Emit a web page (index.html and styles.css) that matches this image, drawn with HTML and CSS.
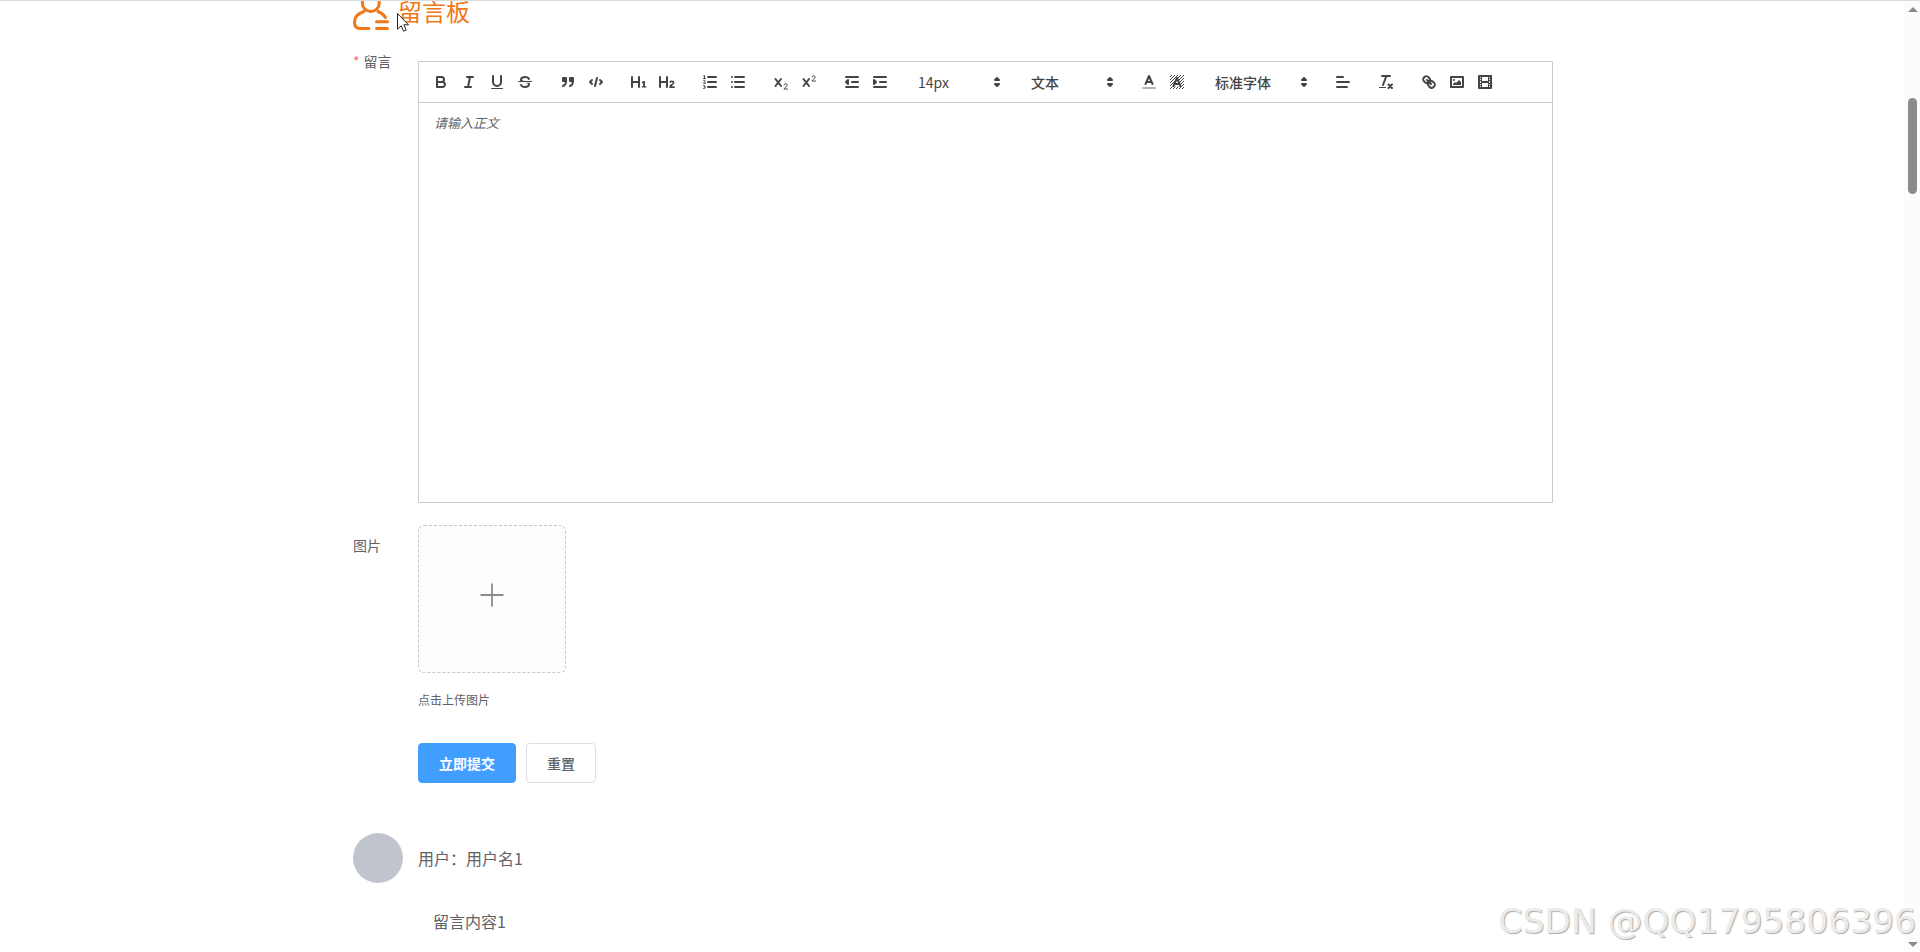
FILE: index.html
```html
<!DOCTYPE html>
<html lang="zh-CN">
<head>
  <meta charset="UTF-8">
  <title>留言板</title>
  <link rel="stylesheet" href="styles.css">
</head>
<body>
  <div class="container">
    <div class="title">
      <svg class="title-icon" viewBox="0 10 38 30">
        <circle cx="17.800" cy="12" r="8.500"/>
        <path d="M11 20.500C5 22.500 1.500 26 1.500 31c0 4 2 6.500 5.500 6.500H16M25 20.500c3.500 1.300 6 3.500 7.500 6M23.500 30.800H34.500M23.500 37.500H34.500"/>
      </svg>
      <span>留言板</span>
    </div>

    <div class="form-item">
      <label class="label required">留言</label>
      <div class="editor">
        <div class="toolbar">
          <span class="formats">
            <button><svg viewBox="0 0 18 18"><path class="st" d="M5,4H9.5A2.5,2.5,0,0,1,12,6.500v0A2.5,2.5,0,0,1,9.500,9H5V4Z"/><path class="st" d="M5,9h5.500A2.500,2.500,0,0,1,13,11.500v0A2.500,2.500,0,0,1,10.500,14H5V9Z"/></svg></button>
            <button><svg viewBox="0 0 18 18"><path class="st" d="M7 4H13M5 14H11M8 14L10 4"/></svg></button>
            <button><svg viewBox="0 0 18 18"><path class="st" d="M5,3V9a4.012,4.012,0,0,0,4,4H9a4.012,4.012,0,0,0,4-4V3"/><rect class="fi" x="3" y="15" width="12" height="1" rx=".5"/></svg></button>
            <button><svg viewBox="0 0 18 18"><path class="st thin" d="M15.500 8.500H2.500"/><path class="fi" d="M9.007,8C6.542,7.791,6,7.519,6,6.500,6,5.792,7.283,5,9,5c1.571,0,2.765.679,2.969,1.309a1,1,0,0,0,1.900-.617C13.356,4.106,11.354,3,9,3,6.200,3,4,4.538,4,6.500a3.200,3.200,0,0,0,.5,1.843Z"/><path class="fi" d="M8.984,10C11.457,10.208,12,10.479,12,11.500c0,.708-1.283,1.500-3,1.500-1.571,0-2.765-.679-2.969-1.309a1,1,0,1,0-1.900.617C4.644,13.894,6.646,15,9,15c2.800,0,5-1.538,5-3.500a3.200,3.200,0,0,0-.5-1.843Z"/></svg></button>
          </span>
          <span class="formats">
            <button><svg viewBox="0 0 18 18"><path class="fi st" d="M4 5H7V8H4ZM11 5H14V8H11Z"/><path class="quote" d="M4 5H7V8H4ZM11 5H14V8H11Z"/><path class="st" d="M7,8c0,4.031-3,5-3,5M14,8c0,4.031-3,5-3,5"/></svg></button>
            <button><svg viewBox="0 0 18 18"><path class="st" d="M5 7L3 9L5 11M13 7L15 9L13 11M10 5L8 13"/></svg></button>
          </span>
          <span class="formats">
            <button><svg viewBox="0 0 18 18"><path class="fi" d="M10,4V14a1,1,0,0,1-2,0V10H3v4a1,1,0,0,1-2,0V4A1,1,0,0,1,3,4V8H8V4a1,1,0,0,1,2,0Zm6.068,9.209H14.981V8.249a.3.3,0,0,0-.342-.343h-.900a1.054,1.054,0,0,0-.6.252l-1.300,1.100a.3.3,0,0,0,0,.48l.52.570a.3.3,0,0,0,.48.030l.310-.270v3.140H12.049a.3.3,0,0,0-.342.340v.650a.3.3,0,0,0,.342.330h4.019a.3.3,0,0,0,.332-.330v-.650A.3.3,0,0,0,16.068,13.209Z"/></svg></button>
            <button><svg viewBox="0 0 18 18"><path class="fi" d="M16.740,13.810v.600a.54.54,0,0,1-.600.600H11.920a.53.53,0,0,1-.600-.600c0-3.400,3.400-3.400,3.400-4.600a.8.8,0,0,0-.900-.7,1.100,1.100,0,0,0-.900.500.54.54,0,0,1-.800.120l-.500-.350a.55.55,0,0,1-.130-.830A2.700,2.700,0,0,1,13.970,7.500c1.500,0,2.500.850,2.500,2.100,0,2-2.600,2.700-2.900,3.620H16.140A.53.53,0,0,1,16.740,13.810ZM9,3A1,1,0,0,0,8,4V8H3V4A1,1,0,0,0,1,4V14a1,1,0,0,0,2,0V10H8v4a1,1,0,0,0,2,0V4A1,1,0,0,0,9,3Z"/></svg></button>
          </span>
          <span class="formats">
            <button><svg viewBox="0 0 18 18"><path class="st" d="M7 4H15M7 9H15M7 14H15"/><path class="st thin" d="M2.500 5.500H4.500M3.500 5.500V2.500L2.700 3M2.500 7.600C3 7 4.400 7.300 4.300 8.200C4.200 9 2.600 9.400 2.500 10.300H4.600M2.500 12.600C4.600 12 4.800 14 3.200 14C5 14 4.800 16 2.500 15.400"/></svg></button>
            <button><svg viewBox="0 0 18 18"><path class="st" d="M6 4H15M6 9H15M6 14H15M3 4V4M3 9V9M3 14V14"/></svg></button>
          </span>
          <span class="formats">
            <button><svg viewBox="0 0 18 18"><path class="st" d="M3.500 6L9 13M9 6L3.500 13"/><path class="st thin" d="M12 12C12.200 10.200 15.400 10.400 15.200 12.400C15 13.800 12.400 14.300 12 16H15.500"/></svg></button>
            <button><svg viewBox="0 0 18 18"><path class="st" d="M3.500 6L9 13M9 6L3.500 13"/><path class="st thin" d="M12 4C12.200 2.200 15.400 2.400 15.200 4.400C15 5.800 12.400 6.300 12 8H15.500"/></svg></button>
          </span>
          <span class="formats">
            <button><svg viewBox="0 0 18 18"><path class="st" d="M3 14H15M3 4H15M9 9H15"/><path class="st fi arrowhead" d="M5 7V11L3 9Z"/></svg></button>
            <button><svg viewBox="0 0 18 18"><path class="st" d="M3 14H15M3 4H15M9 9H15"/><path class="st fi arrowhead" d="M3 7V11L5 9Z"/></svg></button>
          </span>
          <span class="formats">
            <span class="picker size">14px<svg viewBox="0 0 18 18"><path class="st arrowhead" d="M7 11L9 13L11 11ZM7 7L9 5L11 7Z"/></svg></span>
          </span>
          <span class="formats">
            <span class="picker">文本<svg viewBox="0 0 18 18"><path class="st arrowhead" d="M7 11L9 13L11 11ZM7 7L9 5L11 7Z"/></svg></span>
          </span>
          <span class="formats">
            <button><svg viewBox="0 0 18 18"><path class="st faded" d="M3 15H15"/><path class="st" d="M5.500 11L9 3L12.500 11M11.630 9H6.380"/></svg></button>
            <button><svg viewBox="0 0 18 18"><path class="hatch" d="M2 4L4 2M2 7L7 2M2 10L10 2M2 13L13 2M2 16L16 2M5 16L16 5M8 16L16 8M11 16L16 11M14 16L16 14"/><path class="halo" d="M6 12.500L9 6L12 12.500Z"/><path class="st" d="M5.500 13L9 5L12.500 13M11.630 11H6.380"/></svg></button>
          </span>
          <span class="formats">
            <span class="picker font">标准字体<svg viewBox="0 0 18 18"><path class="st arrowhead" d="M7 11L9 13L11 11ZM7 7L9 5L11 7Z"/></svg></span>
          </span>
          <span class="formats">
            <button><svg viewBox="0 0 18 18"><path class="st" d="M3 9H15M3 14H13M3 4H9"/></svg></button>
          </span>
          <span class="formats">
            <button><svg viewBox="0 0 18 18"><path class="st" d="M5 3H13M6 12L9.350 3M11.500 11.500L15 15M15 11.500L11.500 15"/><rect class="fi" x="2" y="14" width="7" height="1" rx=".5"/></svg></button>
          </span>
          <span class="formats">
            <button><svg viewBox="0 0 18 18"><path class="st" d="M7 7L11 11"/><path class="st" d="M8.900,4.577a3.476,3.476,0,0,1,.36,4.679A3.476,3.476,0,0,1,4.577,8.900C3.185,7.500,2.035,6.400,4.217,4.217S7.500,3.185,8.900,4.577Z"/><path class="st" d="M13.423,9.100a3.476,3.476,0,0,0-4.679-.36,3.476,3.476,0,0,0,.36,4.679c1.392,1.392,2.500,2.542,4.679.36S14.815,10.500,13.423,9.100Z"/></svg></button>
            <button><svg viewBox="0 0 18 18"><rect class="st" x="3" y="4" width="12" height="10"/><circle class="fi" cx="6" cy="7" r="1"/><path class="fi" d="M5 12V11L7 9L8 10L11 7L13 9V12Z"/></svg></button>
            <button><svg viewBox="0 0 18 18"><rect class="st" x="3" y="3" width="12" height="12"/><path class="fi" d="M5 3h1v12H5zM12 3h1v12h-1zM5 8h8v2H5zM3 5h3v1H3zM3 7h3v1H3zM3 10h3v1H3zM3 12h3v1H3zM12 5h3v1h-3zM12 7h3v1h-3zM12 10h3v1h-3zM12 12h3v1h-3z"/></svg></button>
          </span>
        </div>
        <div class="editor-body">请输入正文</div>
      </div>
    </div>

    <div class="form-item upload-item">
      <label class="label">图片</label>
      <div>
        <div class="upload">
          <svg viewBox="0 0 24 24"><path d="M12 .5V23.500M.5 12H23.500"/></svg>
        </div>
        <div class="tip">点击上传图片</div>
        <div class="actions">
          <button class="btn primary">立即提交</button>
          <button class="btn">重置</button>
        </div>
      </div>
    </div>

    <div class="comment">
      <div class="avatar"></div>
      <div class="user">用户：用户名1</div>
    </div>
    <div class="comment-content">留言内容1</div>
  </div>

  <div class="scrollbar">
    <div class="arrow up"></div>
    <div class="thumb"></div>
    <div class="arrow down"></div>
  </div>
  <div class="watermark">CSDN @QQ1795806396</div>
  <svg class="cursor" viewBox="0 0 12 19"><path d="M.5 .5V16.200L4.200 12.800L6.600 18.200L9.200 17L6.800 11.800H11.500Z"/></svg>
</body>
</html>
```
FILE: styles.css
```css
* {
  box-sizing: border-box;
}
body {
  margin: 0;
  height: 952px;
  overflow: hidden;
  background: #fff;
  border-top: 1px solid #dcdcdc;
  font-family: "Noto Sans CJK SC", sans-serif;
  font-size: 14px;
  color: #606266;
}
button {
  font-family: inherit;
}
.container {
  width: 1200px;
  margin: 0 auto 0 353px;
}
.title {
  display: flex;
  align-items: flex-start;
  gap: 7px;
  height: 30px;
  color: #f07818;
  font-size: 24px;
  line-height: 20px;
}
.title-icon {
  width: 38px;
  height: 30px;
  fill: none;
  stroke: #f07818;
  stroke-width: 3;
  stroke-linecap: round;
}
.form-item {
  display: flex;
  margin-top: 30px;
}
.label {
  width: 65px;
  flex: none;
  line-height: 40px;
}
.required {
  height: 14px;
  margin-top: -7px;
  line-height: 14px;
}
.required::before {
  content: "*";
  color: #f56c6c;
  margin-right: 4px;
}

/* editor */
.editor {
  width: 1135px;
  height: 442px;
  border: 1px solid #ccc;
}
.toolbar {
  display: flex;
  height: 41px;
  padding: 8px;
  border-bottom: 1px solid #ccc;
}
.formats {
  display: flex;
  margin-right: 15px;
}
.toolbar button {
  width: 28px;
  height: 24px;
  padding: 3px 5px;
  border: 0;
  background: none;
}
.toolbar svg {
  display: block;
  width: 18px;
  height: 18px;
}
.st {
  fill: none;
  stroke: #444;
  stroke-width: 2;
  stroke-linecap: round;
  stroke-linejoin: round;
}
.fi,
.quote,
.arrowhead {
  fill: #444;
}
.thin {
  stroke-width: 1;
}
.faded {
  opacity: .4;
}
.hatch {
  fill: none;
  stroke: #444;
  stroke-width: 1;
}
.halo {
  fill: #fff;
  stroke: #fff;
  stroke-width: 2;
}
.picker {
  display: flex;
  align-items: center;
  justify-content: space-between;
  width: 98px;
  height: 24px;
  padding: 0 1px 0 9px;
  color: #444;
  font-weight: 500;
  line-height: 22px;
  padding-bottom: 1px;
}
.picker.size {
  font-weight: 400;
}
.picker.font {
  width: 108px;
}
.editor-body {
  padding: 11px 15px;
  font-size: 13px;
  font-style: italic;
  line-height: 18px;
}

/* upload */
.upload-item {
  margin-top: 22px;
}
.upload {
  display: flex;
  align-items: center;
  justify-content: center;
  width: 148px;
  height: 148px;
  border: 1px dashed #c4c8cc;
  border-radius: 6px;
  background: #fbfdff;
}
.upload svg {
  width: 24px;
  height: 24px;
  margin: 0 1px 9px 0;
  stroke: #8c8c8c;
  stroke-width: 1.8;
}
.tip {
  margin-top: 18px;
  font-size: 12px;
  line-height: 18px;
}
.actions {
  display: flex;
  gap: 10px;
  margin-top: 34px;
}
.btn {
  height: 40px;
  padding: 0 20px 1px;
  border: 1px solid #dcdfe6;
  border-radius: 4px;
  background: #fff;
  color: #606266;
  font-size: 14px;
  font-weight: 500;
}
.primary {
  border-color: #409eff;
  background: #409eff;
  color: #fff;
  font-weight: 700;
}

/* comments */
.comment {
  display: flex;
  align-items: center;
  margin-top: 50px;
  font-size: 16px;
}
.avatar {
  width: 50px;
  height: 50px;
  margin-right: 15px;
  border-radius: 50%;
  background: #c0c4cc;
}
.comment-content {
  margin: 26px 0 0 80px;
  font-size: 16px;
  line-height: 24px;
}

.scrollbar {
  position: absolute;
  top: 1px;
  right: 0;
  width: 16px;
  height: 951px;
  background: #fcfcfc;
}
.thumb {
  position: absolute;
  top: 97px;
  left: 4px;
  width: 9px;
  height: 96px;
  border-radius: 5px;
  background: #8b8b8b;
}
.arrow {
  position: absolute;
  left: 4px;
  border: 5px solid transparent;
  border-top: 0;
  border-bottom: 5px solid #8b8b8b;
}
.up {
  top: 6px;
}
.down {
  bottom: 5px;
  transform: rotate(180deg);
}
.watermark {
  position: absolute;
  right: 4px;
  bottom: 10px;
  font-family: "DejaVu Sans", sans-serif;
  font-size: 34.5px;
  line-height: 41px;
  color: #ebebeb;
  text-shadow: 1px 1px 1px #aaa;
  white-space: nowrap;
}
.cursor {
  position: absolute;
  top: 13px;
  left: 397px;
  width: 12px;
  height: 19px;
  fill: #fff;
  stroke: #222;
}
```
